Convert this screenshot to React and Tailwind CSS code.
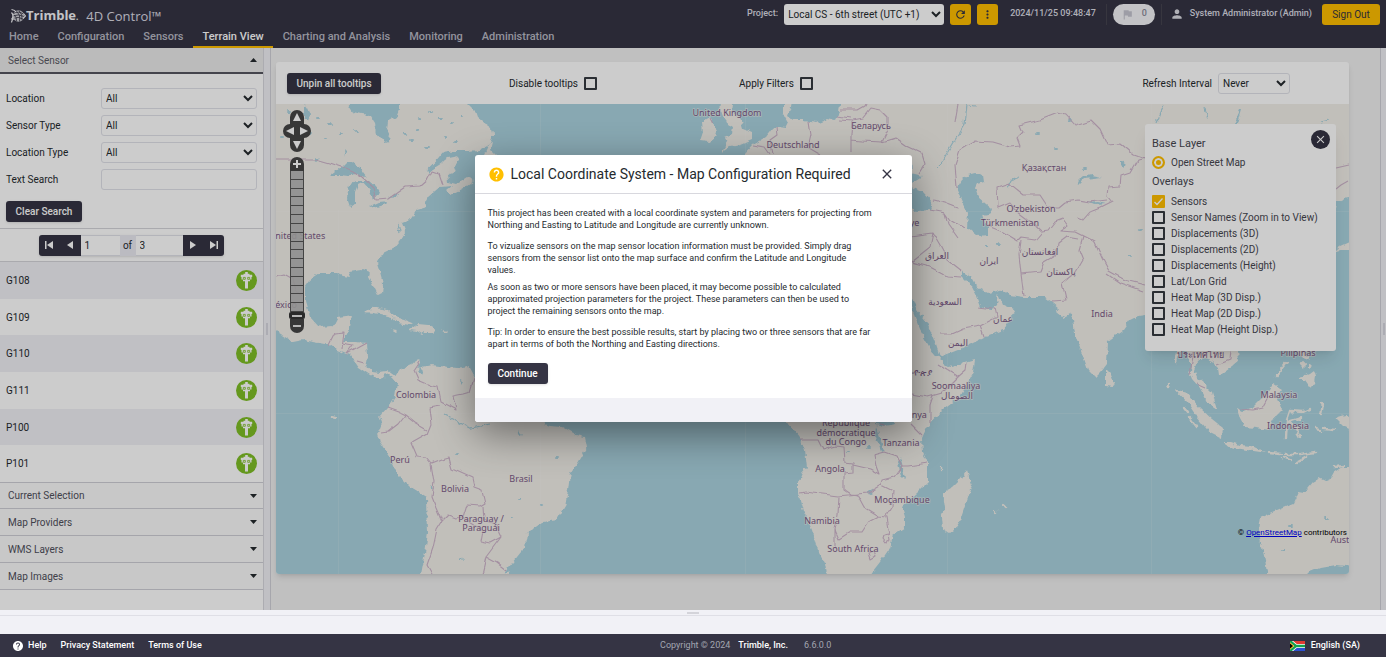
import React, { useState } from "react";
import { MdRefresh, MdMoreVert, MdFlag, MdPerson, MdHelp, MdClose } from "react-icons/md";

const NAV = ["Home", "Configuration", "Sensors", "Terrain View", "Charting and Analysis", "Monitoring", "Administration"];
const SENSORS = ["G108", "G109", "G110", "G111", "P100", "P101"];
const SECTIONS = ["Current Selection", "Map Providers", "WMS Layers", "Map Images"];
const OVERLAYS = [
  "Sensors",
  "Sensor Names (Zoom in to View)",
  "Displacements (3D)",
  "Displacements (2D)",
  "Displacements (Height)",
  "Lat/Lon Grid",
  "Heat Map (3D Disp.)",
  "Heat Map (2D Disp.)",
  "Heat Map (Height Disp.)",
];

// land outlines, map canvas units
const LAND = [
  // North + Central + South America
  "M270 98 L348 98 348 104 353 112 362 114 370 115 375 123 377 133 385 143 389 142 390 133 387 130 388 122 396 117 399 109 399 98 468 98 468 104 476 112 478 118 485 123 492 128 493 136 489 145 480 150 468 151 455 151 443 153 435 163 427 172 440 164 448 158 458 156 460 160 454 166 456 172 447 175 448 182 456 184 467 177 474 180 463 188 450 195 446 191 452 186 440 187 428 197 425 203 427 207 417 210 410 220 402 223 405 231 403 237 395 247 383 253 377 263 380 272 383 283 382 293 378 295 373 285 369 277 370 273 362 270 348 272 350 277 343 276 337 273 320 273 310 280 305 287 305 300 310 317 320 328 333 327 338 317 352 315 350 327 346 335 343 342 355 342 367 343 368 357 366 366 372 371 380 372 388 371 395 376 399 370 403 368 412 364 420 359 422 362 417 368 427 366 431 365 440 366 457 368 468 366 474 377 500 385 520 402 540 412 545 424 550 426 563 427 577 435 585 437 587 448 578 463 570 473 568 490 565 507 557 520 543 522 527 533 525 547 513 562 505 580 420 580 425 553 428 533 427 497 410 487 398 475 390 457 380 442 378 433 382 423 380 417 388 408 395 397 397 383 392 377 386 373 380 380 370 375 358 367 350 355 337 350 330 345 303 340 293 342 277 332 270 325 Z",
  // Cuba, Hispaniola, Jamaica, Puerto Rico
  "M365 312 L373 307 387 310 395 317 403 319 413 323 410 325 397 323 392 317 380 314 Z",
  "M418 324 L428 325 435 329 432 332 425 332 422 334 417 331 409 330 Z",
  "M391 329 L398 330 396 332 Z M442 330 L448 331 446 333 Z",
  // Newfoundland tip
  "M490 143 L493 142 491 150 497 156 484 156 487 150 Z",
  // Ireland + Great Britain
  "M702 123 L710 118 715 125 717 133 715 139 708 142 700 141 703 132 Z",
  "M722 98 L733 98 733 104 732 112 740 118 743 128 752 132 752 140 740 145 730 147 722 152 728 142 725 137 732 134 733 128 727 124 724 116 720 110 Z",
  // Eurasia
  "M740 158 L745 154 753 145 765 138 770 132 773 128 778 127 785 128 788 122 783 113 783 98 792 98 791 107 788 116 793 120 803 120 817 122 827 118 835 120 839 112 840 104 840 98 1355 98 1355 197 1345 199 1336 203 1330 230 1310 260 1290 290 1260 310 1240 335 1238 352 1239 360 1233 365 1219 375 1218 368 1212 362 1203 358 1197 362 1194 370 1197 378 1203 383 1212 392 1217 409 1207 402 1200 388 1192 379 1190 374 1192 366 1187 352 1175 330 1160 320 1145 315 1138 316 1130 320 1123 330 1108 341 1107 363 1100 372 1095 377 1088 370 1082 353 1075 333 1072 313 1063 318 1056 312 1059 308 1052 302 1045 297 1023 297 1010 295 1002 289 996 291 988 293 978 288 972 277 962 271 962 276 970 284 976 296 980 307 991 310 996 305 998 294 1002 304 1015 310 1010 320 1003 330 983 338 963 348 940 357 936 345 927 323 917 310 911 296 900 275 850 270 740 300 Z",
  // Africa
  "M700 300 L880 275 900 290 911 307 920 330 930 348 940 360 950 367 968 362 975 360 973 373 960 397 943 410 927 427 922 438 923 453 928 463 928 482 917 493 902 507 905 517 905 527 893 535 890 547 880 562 866 580 828 580 825 563 818 550 812 530 803 510 798 493 798 483 802 473 807 467 805 450 800 437 788 423 775 405 700 400 Z",
  "M967 470 L972 485 967 500 958 527 950 533 942 528 941 517 945 507 943 493 952 488 962 478 Z",
  "M1106 370 L1111 375 1114 382 1112 387 1106 386 Z",
  // Sumatra, Java, Borneo
  "M1175 389 L1187 393 1200 408 1213 420 1223 428 1222 439 1210 433 1197 417 1187 402 Z",
  "M1223 442 L1231 442 1240 445 1252 446 1267 453 1247 450 1230 447 Z",
  "M1237 408 L1243 411 1252 408 1260 400 1268 390 1273 383 1283 390 1277 398 1282 410 1275 417 1268 430 1257 428 1245 427 1240 418 Z",
  // Philippines
  "M1297 380 L1303 376 1310 373 1314 370 1316 377 1315 385 1310 387 1305 380 Z M1297 350 L1309 350 1306 356 1311 361 1303 358 Z M1299 364 L1305 362 1304 369 Z M1308 363 L1312 367 1308 370 Z",
  // New Guinea, Australia
  "M1335 418 L1345 415 1355 417 1355 432 1344 427 1338 421 Z",
  "M1268 580 L1265 560 1258 530 1260 517 1277 510 1293 503 1298 492 1304 493 1313 482 1320 478 1328 482 1333 473 1342 467 1355 467 1355 567 1337 565 1320 568 1305 574 1303 580 Z",
  // Japan edge
  "M1349 242 L1340 246 1336 252 1343 250 1355 250 1355 242 Z",
];

const THIN_LAND = [
  "M1309 409 L1303 412 1290 411 1287 420 1286 438",
  "M1288 422 L1301 418 M1291 423 L1296 430 1300 437",
  "M1269 453 L1280 454 M1284 454 L1297 454 M1300 454 L1316 452",
  "M1298 462 L1307 457 M1283 457 L1290 460",
  "M1286 363 L1276 376",
  "M1323 404 L1321 415 M1316 429 L1320 430 M1324 429 L1335 430",
  "M1184 407 L1188 412 M1190 418 L1197 427",
  "M1178 352 L1176 362 M1168 388 L1169 384",
  "M1334 467 L1343 466",
  "M332 416 L336 417 M941 467 L941 469 M1004 506 L1005 507 M995 511 L996 512",
];

const WATER = [
  // Great Lakes
  "M330 176 L340 168 346 162 352 162 360 168 366 176 362 178 354 173 348 177 340 176 Z",
  "M349 186 L356 181 364 181 358 184 355 192 355 203 350 207 347 198 Z",
  "M362 181 L370 181 377 187 380 192 375 196 373 201 370 190 Z",
  "M370 206 L379 202 388 201 384 205 374 208 Z M388 199 L396 195 400 194 398 198 Z",
  "M304 104 L307 108 310 115 308 121 304 118 Z M315 156 L319 159 316 161 Z M344 151 L347 154 345 158 Z",
  // Black Sea + Azov
  "M905 185 L911 187 923 192 933 203 930 210 917 211 905 206 Z M905 172 L914 174 922 176 914 181 911 184 905 182 Z",
  // Caspian
  "M957 188 L962 180 968 175 976 173 983 175 984 182 977 184 975 188 978 197 986 204 990 207 992 213 983 215 985 222 988 227 988 235 977 236 967 228 968 213 963 202 Z",
  "M1078 181 L1083 177 1092 175 1102 177 1094 178 1084 179 1079 184 Z M1087 202 L1098 201 1106 203 1096 204 Z",
  "M1121 160 L1126 164 1124 168 1121 165 Z M1240 110 L1242 110 1238 124 1234 124 Z",
  // African lakes
  "M876 416 L892 414 896 424 885 426 876 424 Z",
  "M877 424 L880 438 884 450 881 452 876 436 Z M900 457 L903 468 905 480 901 476 898 462 Z M867 493 L875 488 871 494 Z",
  // South America
  "M420 366 L424 370 422 374 419 370 Z M428 484 L434 487 433 490 Z M459 380 L462 381 460 384 Z M518 430 L522 434 520 435 Z M460 557 L464 558 461 561 Z",
  "M513 562 L508 568 504 574 510 570 516 560 Z",
];

const BORDERS = [
  "M276 159 L316 159 330 163 345 168 352 171 363 178 373 187 376 200 388 199 405 187 420 186 428 179 432 171 438 173 442 185",
  "M276 276 L284 274 293 279 296 289 303 297",
  "M329 345 L335 333 344 332 342 349 M342 344 L353 346 347 354 367 343 M357 360 L364 362",
  "M420 362 L414 371 418 380 432 386 438 387 441 402 456 410 453 396 463 394 470 392 474 378",
  "M441 406 L429 408 431 424 427 434 411 443 417 457 427 458 M388 408 L399 412 405 415 415 423 427 430 M405 415 L398 424 389 431 382 432",
  "M427 458 L432 464 442 460 449 458 452 469 472 478 474 487 482 490 485 503 480 506 467 505 463 518 455 519 447 516 442 521 436 507 432 497 434 482 431 464",
  "M442 521 L437 529 433 548 427 565 432 574 M463 518 L482 530 480 541 490 543 501 537 499 533 M501 537 L486 557 497 563 506 570 M486 557 L482 574 M483 506 L484 520 497 525 499 533",
  // Europe
  "M710 118 L713 124 M753 146 L765 148 770 155 M776 128 L777 135 770 140 773 155 M809 122 L811 135 808 148 820 155 M840 120 L852 121 851 135 851 152 M841 110 L858 110 865 106 866 104 M852 120 L862 118 870 108 880 110 888 118 888 130 882 142 862 141 851 140 M882 142 L895 138 905 145 922 153 925 163 918 174 M838 116 L850 118",
  "M958 104 L955 122",
  // Kazakhstan + Central Asia
  "M957 188 L955 165 960 150 975 141 993 142 1010 147 1020 146 1017 138 1023 132 1020 125 1040 120 1058 113 1065 115 1075 126 1091 121 1100 130 1107 145 1120 144 1133 155 1147 160",
  "M1145 158 L1137 160 1130 172 1121 175 1120 186 1108 187 1107 196 1112 202 1100 208 1090 212 1083 220 1078 218",
  "M998 208 L997 187 1009 183 1024 195 1040 195 1048 207 1059 207 1065 202 1078 200 1090 202 1107 200",
  "M998 208 L1010 203 1018 212 1030 221 1042 232 1048 231 1055 222 1063 219 1068 226 1060 231 1075 232 1083 236",
  "M988 226 L1003 232 1018 241 1021 238 1035 240 1042 232 M1021 241 L1019 255 1021 274 1024 297 M1021 274 L1040 272 1044 262 1056 255 1058 243 1066 237 1078 239",
  "M1083 236 L1095 242 1102 258 1109 271 1125 280 1145 285 M1107 274 L1120 283 1143 291 M1083 236 L1079 250 1083 260 1076 272 1062 283 1066 300 1053 301",
  // Caucasus + Middle East
  "M933 200 L945 203 958 208 M930 210 L945 213 950 220 963 228 M945 213 L948 224 958 238 M911 236 L933 233 940 245 948 260 962 271 M933 233 L930 247 911 262 M911 262 L930 267 947 276 962 277",
  "M940 334 L952 334 963 329 980 326 984 337 M978 307 L993 309 M980 326 L997 317 995 308",
  // Africa
  "M966 362 L965 371 958 377 937 364 M958 377 L942 393 928 397 911 394 M933 396 L930 405 930 422",
  "M800 440 L818 440 823 450 836 446 844 447 845 462 853 463 853 472 844 473 844 490 850 494 858 495 M853 465 L870 469 879 474 876 466 874 455 885 452 897 456 902 466 894 477 882 480 881 485 867 493 M798 493 L805 492 838 496 867 493",
  "M839 497 L838 514 835 530 839 539 850 532 862 532 870 520 878 516 887 517 890 535 M858 495 L865 508 878 516 M881 485 L893 491 892 506 886 516 M908 466 L928 463 M902 466 L908 466 M835 530 L835 548",
  "M884 535 L889 534 890 540 886 542 883 538 Z M868 553 L873 551 875 556 870 559 Z M911 424 L922 435 M880 425 L885 426",
  // South-east Asia
  "M1240 409 L1253 410 1262 408 1268 397 M1197 384 L1206 388 M1217 365 L1230 360 1231 350 M1190 374 L1194 352",
  "M1336 168 L1349 165 M1337 189 L1342 185 1349 181",
];

const LAKE_DOTS = [
  [420, 118], [431, 112], [452, 124], [446, 137], [440, 119], [462, 116], [417, 130], [405, 134], [427, 147], [289, 112], [296, 122],
  [301, 130], [282, 137], [295, 146], [318, 118], [330, 124], [341, 133], [326, 139], [357, 131], [310, 134], [456, 142], [412, 141],
  [1056, 149], [1037, 133], [1070, 120], [987, 247], [998, 244], [1085, 168], [1140, 230], [1130, 256], [1290, 525], [1283, 551], [1326, 518],
  [541, 505], [520, 499], [512, 517], [557, 457], [457, 454], [868, 448], [848, 452],
];

const LABELS = [
  ["United Kingdom", 727, 116], ["Deutschland", 793, 148], ["Беларусь", 871, 129], ["Україна", 896, 169],
  ["Қазақстан", 1044, 171], ["O‘zbekiston", 1031, 212], ["Türkmenistan", 1010, 226], ["Türkiye", 904, 226],
  ["العراق", 937, 259], ["ایران", 989, 264], ["افغانستان", 1040, 255], ["پاکستان", 1061, 275],
  ["السعودية", 945, 305], ["عمان", 1003, 322], ["اليمن", 958, 346], ["India", 1102, 317],
  ["United States", 297, 239], ["México", 282, 308], ["Colombia", 416, 398], ["Perú", 400, 463],
  ["Bolivia", 455, 492], ["Brasil", 521, 482], ["Paraguay /", 481, 522], ["Paraguái", 481, 531],
  ["ኢትዮጵያ", 917, 376], ["Soomaaliya", 956, 389], ["الصومال", 957, 399], ["Kenya", 914, 418],
  ["République", 846, 426], ["démocratique", 846, 436], ["du Congo", 846, 445], ["Tanzania", 901, 446],
  ["Angola", 830, 472], ["Moçambique", 902, 503], ["Namibia", 822, 524], ["South Africa", 853, 552],
  ["ประเทศไทย", 1200, 358], ["Pilipinas", 1298, 356], ["Malaysia", 1279, 398], ["Indonesia", 1288, 429],
  ["Australia", 1349, 543],
];

function WorldMap() {
  return (
    <svg
      className="absolute inset-0 h-full w-full bg-[#aad3df]"
      viewBox="276 104 1073 470"
      preserveAspectRatio="xMinYMin slice"
      role="img"
      aria-label="World map"
    >
      <defs>
        {/* roughens the coastlines a little */}
        <filter id="coast" x="276" y="104" width="1073" height="470" filterUnits="userSpaceOnUse" colorInterpolationFilters="sRGB">
          <feTurbulence type="fractalNoise" baseFrequency="0.16" numOctaves="2" seed="4" />
          <feDisplacementMap in="SourceGraphic" scale="6" xChannelSelector="R" yChannelSelector="G" />
        </filter>
        <filter id="border" x="276" y="104" width="1073" height="470" filterUnits="userSpaceOnUse" colorInterpolationFilters="sRGB">
          <feTurbulence type="fractalNoise" baseFrequency="0.09" numOctaves="1" seed="7" />
          <feDisplacementMap in="SourceGraphic" scale="6" xChannelSelector="R" yChannelSelector="G" />
        </filter>
      </defs>
      <g filter="url(#coast)">
        <g fill="#f2efe9">
          {LAND.map((d) => <path key={d} d={d} />)}
        </g>
        <g fill="none" stroke="#f2efe9" strokeWidth="2.4" strokeLinecap="round">
          {THIN_LAND.map((d) => <path key={d} d={d} />)}
        </g>
        <g fill="#aad3df">
          {WATER.map((d) => <path key={d} d={d} />)}
          {LAKE_DOTS.map(([x, y]) => <ellipse key={`${x}-${y}`} cx={x} cy={y} rx="2.2" ry="1" />)}
        </g>
        <g fill="none" stroke="#aad3df" strokeWidth="1.2">
          <path d="M388 300 L395 306 M966 104 L964 125 955 140 938 168 M1156 122 L1160 112 1163 106 M1205 108 L1208 120 M1320 122 L1328 120 M1008 189 L1012 180 1020 177 M444 415 L458 422 471 428 490 424 M398 224 L400 232 M965 104 L975 106" />
          <path d="M427 172 L438 161 447 154" strokeWidth="2" />
        </g>
      </g>
      <g filter="url(#border)" fill="none" stroke="#cdb4ca" strokeWidth="1.1" strokeLinejoin="round">
        {BORDERS.map((d) => <path key={d} d={d} />)}
      </g>
      <path
        d="M338.5 210 V574 M540.5 104 V574 M745.5 104 V574 M947.5 104 V574 M1151.5 104 V574 M276 211.5 H1349 M276 413.5 H1349"
        stroke="#ffffff"
        strokeOpacity="0.12"
      />
      <g
        className="font-['Noto_Sans','DejaVu_Sans',sans-serif] text-[9px]"
        textAnchor="middle"
        fill="#7d5c88"
        stroke="#f2efe9"
        strokeWidth="1.5"
        strokeOpacity="0.6"
        paintOrder="stroke"
      >
        {LABELS.map(([name, x, y]) => <text key={name} x={x} y={y}>{name}</text>)}
      </g>
    </svg>
  );
}

function TrimbleGlobe() {
  return (
    <svg className="h-4 w-4" viewBox="0 0 16 16" fill="none">
      <circle cx="8.500" cy="8" r="5.800" fill="#f4f4f8" fillOpacity="0.8" />
      <path stroke="#353444" strokeWidth="0.8" d="M3.500 5.500 Q8 2.500 13.500 6 M3 8 Q8 5.500 14 8.500 M3.500 10.500 Q8 8 13 11 M5.500 3 Q11 6 9.500 13.500 M9 2.500 Q13 7 12 12 M4 7 Q7 9 6.500 13" />
      <path stroke="#f4f4f8" strokeWidth="1.2" d="M1.500 1.500 Q5 2 6 4 M1.500 14.500 Q2 11 4.500 10.500 M1.500 4.500 Q4.500 8 1.500 11.500 M13.500 5.500 L15.500 8 13 10.500" />
    </svg>
  );
}

function SensorIcon() {
  return (
    <svg className="h-[21px] w-[21px]" viewBox="0 0 21 21">
      <circle cx="10.500" cy="10.500" r="10.500" fill="#7fbf26" />
      <path fill="#ffffff" d="M9.200 2 H11.800 V3.800 H13.500 V4.800 H16.200 V7 H15.500 V9.500 H14 V11.300 H12 V18.500 H9 V11.300 H7 V9.500 H5.500 V7 H4.800 V4.800 H7.500 V3.800 H9.200 Z" />
      <path fill="none" stroke="#7fbf26" strokeWidth="0.8" d="M7.300 7.400 H9.300 V9.300 H7.300 Z M11.700 7.400 H13.700 V9.300 H11.700 Z" />
    </svg>
  );
}

function SouthAfricaFlag() {
  return (
    <svg className="h-2.5 w-[15px]" viewBox="0 0 15 10">
      <path fill="#e03c31" d="M0 0H15V5H0Z" />
      <path fill="#2b4fd0" d="M0 5H15V10H0Z" />
      <path fill="none" stroke="#fff" strokeWidth="4" d="M0 0 L6 5 L0 10 M6 5H15" />
      <path fill="none" stroke="#12a150" strokeWidth="2.4" d="M0 0 L6 5 L0 10 M6 5H15" />
      <path fill="#ffb612" d="M0 1.500 L4.200 5 L0 8.500Z" />
      <path fill="#000" d="M0 2.500 L3 5 L0 7.500Z" />
    </svg>
  );
}

function Header() {
  return (
    <header className="flex h-12 shrink-0 flex-col bg-[#353444] text-[#dcdce4]">
      <div className="flex h-7 items-center justify-between pr-1.5 pl-2.5">
        <div className="flex items-center pt-1 font-['Open_Sans',sans-serif]">
          <TrimbleGlobe />
          <span className="text-[13px] leading-4 font-bold text-[#f4f4f8]">Trimble<span className="text-[8px]">.</span></span>
          <span className="ml-2 text-[13px] leading-4">4D Control™</span>
        </div>
        <div className="flex items-center text-[9px] font-medium">
          <label htmlFor="project" className="mr-1.5">Project:</label>
          <select id="project" className="mr-1.5 h-[21px] w-[160px] rounded-[3px] bg-white text-[10px] font-normal text-[#252a2e]">
            <option>Local CS - 6th street (UTC +1)</option>
          </select>
          <button aria-label="Refresh" className="mr-1.5 flex h-[21px] w-[21px] items-center justify-center rounded-[3px] bg-[#ffbf00] text-[#353444]">
            <MdRefresh size={13} />
          </button>
          <button aria-label="More" className="flex h-[21px] w-[21px] items-center justify-center rounded-[3px] bg-[#ffbf00] text-[#353444]">
            <MdMoreVert size={13} />
          </button>
          <span className="mr-2.5 ml-3">2024/11/25 09:48:47</span>
          <div className="flex items-center border-x border-[#45444f] px-1.5">
            <span className="flex h-[21px] w-[42px] items-center justify-center gap-2 rounded-full bg-[#f4f4f8] text-[#8b8b98]">
              <MdFlag size={13} className="text-[#c5c5d0]" />0
            </span>
          </div>
          <MdPerson size={14} className="ml-2" />
          <span className="ml-1.5">System Administrator (Admin)</span>
          <button className="ml-2.5 h-[21px] w-[58px] rounded-[3px] bg-[#ffbf00] text-[10px] font-normal text-[#353444]">Sign Out</button>
        </div>
      </div>
      <nav className="flex h-5 gap-px text-[11px] font-medium">
        {NAV.map((item) => (
          <a
            key={item}
            href="#"
            className={
              item === "Terrain View"
                ? "border-b-2 border-[#ffbf00] px-[9px] leading-[18px] text-white"
                : "px-[9px] leading-[18px] text-[#b9b9c4]"
            }
          >
            {item}
          </a>
        ))}
      </nav>
    </header>
  );
}

function Triangle({ up }) {
  return (
    <svg className="h-1 w-[7px]" viewBox="0 0 7 4" fill="#252a2e">
      <path d={up ? "M0 4 L3.500 0 L7 4Z" : "M0 0 L3.500 4 L7 0Z"} />
    </svg>
  );
}

function Sidebar() {
  const [text, setText] = useState("");
  const field = "h-[21px] w-[156px] rounded-[3px] border border-[#e0e1e9] bg-white";
  return (
    <aside className="flex w-[264px] shrink-0 flex-col border-r border-[#d8d8de] bg-white text-[10px] text-[#252a2e]">
      <button className="flex h-[26px] shrink-0 items-center justify-between border-b-2 border-[#55555f] bg-[#eaeaea] pr-1.5 pl-2 text-[#5a5a64]">
        Select Sensor
        <Triangle up />
      </button>
      <div className="flex flex-col gap-1.5 pt-3.5 pr-1.5 pl-1.5">
        {["Location", "Sensor Type", "Location Type"].map((name) => (
          <div key={name} className="flex items-center justify-between">
            <label htmlFor={name}>{name}</label>
            <select id={name} className={field}>
              <option>All</option>
            </select>
          </div>
        ))}
        <div className="flex items-center justify-between">
          <label htmlFor="search">Text Search</label>
          <input id="search" value={text} onChange={(e) => setText(e.target.value)} className={field} />
        </div>
      </div>
      <button
        onClick={() => setText("")}
        className="mt-[11px] ml-1.5 h-[21px] w-[76px] shrink-0 rounded-[3px] bg-[#353444] font-medium text-white shadow"
      >
        Clear Search
      </button>
      <div className="mt-1.5 flex h-[34px] shrink-0 items-center justify-center border-y border-[#d5d5da]">
        <div className="flex h-[21px] w-[185px] overflow-hidden rounded-[3px] bg-[#353444] text-white shadow">
          <button aria-label="First page" className="flex flex-1 items-center justify-center">
            <svg className="h-2 w-2" viewBox="0 0 8 8" fill="currentColor"><path d="M0 0H1.500V8H0Z M8 0V8L2 4Z" /></svg>
          </button>
          <button aria-label="Previous page" className="flex flex-1 items-center justify-center">
            <svg className="h-2 w-2" viewBox="0 0 8 8" fill="currentColor"><path d="M7 0V8L1 4Z" /></svg>
          </button>
          <input aria-label="Page" defaultValue="1" className="w-[39px] border-y border-[#e0e1e9] bg-white px-1 text-[#252a2e]" />
          <span className="flex w-4 items-center justify-center bg-[#eaeaf2] text-[#252a2e]">of</span>
          <input aria-label="Page count" readOnly value="3" className="w-[47px] border-y border-[#e0e1e9] bg-white px-1 text-[#252a2e]" />
          <button aria-label="Next page" className="flex flex-1 items-center justify-center">
            <svg className="h-2 w-2" viewBox="0 0 8 8" fill="currentColor"><path d="M1 0V8L7 4Z" /></svg>
          </button>
          <button aria-label="Last page" className="flex flex-1 items-center justify-center">
            <svg className="h-2 w-2" viewBox="0 0 8 8" fill="currentColor"><path d="M6.500 0H8V8H6.500Z M0 0V8L6 4Z" /></svg>
          </button>
        </div>
      </div>
      <ul className="flex h-[220px] shrink-0 flex-col">
        {SENSORS.map((s, i) => (
          <li key={s} className={`flex flex-1 items-center justify-between px-1.5 ${i % 2 === 0 ? "bg-[#f1f1f6]" : "bg-white"}`}>
            {s}
            <SensorIcon />
          </li>
        ))}
      </ul>
      {SECTIONS.map((s, i) => (
        <button
          key={s}
          className={`flex h-[27px] shrink-0 items-center justify-between bg-[#fafafa] pr-1.5 pl-2 text-[#50505a] border-[#cfcfd6] border-b ${i === 0 ? "border-t" : ""}`}
        >
          {s}
          <Triangle />
        </button>
      ))}
    </aside>
  );
}

function MapControls() {
  const pad = "flex h-3.5 w-3.5 items-center justify-center bg-[#454545] text-white";
  return (
    <div className="absolute top-1.5 left-[7px] flex w-7 flex-col items-center">
      <button aria-label="Pan up" className={`${pad} rounded-t-full`}>
        <svg className="h-2 w-2" viewBox="0 0 8 8" fill="currentColor"><path d="M4 0L8 8H0Z" /></svg>
      </button>
      <div className="flex">
        <button aria-label="Pan left" className={`${pad} rounded-l-full`}>
          <svg className="h-2 w-2" viewBox="0 0 8 8" fill="currentColor"><path d="M0 4L8 0V8Z" /></svg>
        </button>
        <button aria-label="Pan right" className={`${pad} rounded-r-full`}>
          <svg className="h-2 w-2" viewBox="0 0 8 8" fill="currentColor"><path d="M8 4L0 0V8Z" /></svg>
        </button>
      </div>
      <button aria-label="Pan down" className={`${pad} rounded-b-full`}>
        <svg className="h-2 w-2" viewBox="0 0 8 8" fill="currentColor"><path d="M4 8L8 0H0Z" /></svg>
      </button>
      <button aria-label="Zoom in" className={`${pad} mt-[5px] rounded-t-full`}>
        <svg className="h-2 w-2" viewBox="0 0 8 8" fill="currentColor"><path d="M3 0H5V3H8V5H5V8H3V5H0V3H3Z" /></svg>
      </button>
      <div className="flex h-[141px] w-3.5 flex-col border-x border-[#555]">
        {Array.from({ length: 16 }, (_, i) => (
          <span key={i} className="flex-1 border-b border-[#555] bg-[#b4b4b4]/90" />
        ))}
      </div>
      <span className="flex h-[7px] w-4 items-center justify-center rounded-[2px] bg-[#353535]">
        <span className="h-0.5 w-2.5 bg-[#e4e4e4]" />
      </span>
      <button aria-label="Zoom out" className={`${pad} rounded-b-full`}>
        <span className="h-0.5 w-2 bg-[#e4e4e4]" />
      </button>
    </div>
  );
}

function CheckBox({ id, checked, onChange }) {
  return (
    <span className="relative flex h-[13px] w-[13px]">
      <input
        id={id}
        type="checkbox"
        checked={checked}
        onChange={onChange}
        className="h-[13px] w-[13px] appearance-none rounded-[1px] border-2 border-[#353a40] bg-white checked:border-[#ffbf00] checked:bg-[#ffbf00]"
      />
      {checked && (
        <svg className="pointer-events-none absolute inset-0" viewBox="0 0 13 13" fill="none" stroke="#fff" strokeWidth="1.300">
          <path d="M2.500 7 L5 9.500 L10.500 3.500" />
        </svg>
      )}
    </span>
  );
}

function LayerSwitcher() {
  const [shown, setShown] = useState(["Sensors"]);
  const toggle = (name) =>
    setShown((prev) => (prev.includes(name) ? prev.filter((n) => n !== name) : [...prev, name]));

  return (
    <div className="absolute top-5 right-[13px] h-[227px] w-[191px] rounded-[3px] bg-white px-[7px] pt-[13px] text-[10px] text-[#46464f] shadow-lg">
      <button aria-label="Close layers" className="absolute top-1.5 right-1.5 flex h-[19px] w-[19px] items-center justify-center rounded-full bg-[#353444] text-white">
        <MdClose size={13} />
      </button>
      <p className="text-[11px] leading-[14px]">Base Layer</p>
      <div className="mt-[5px] flex h-[13px] items-center gap-1.5">
        <input id="osm" type="radio" defaultChecked className="h-[13px] w-[13px] appearance-none rounded-full border-2 border-[#ffbf00] bg-[#ffbf00] shadow-[inset_0_0_0_2px_#fff]" />
        <label htmlFor="osm">Open Street Map</label>
      </div>
      <p className="mt-1.5 mb-1 text-[11px] leading-[14px]">Overlays</p>
      {OVERLAYS.map((name) => (
        <div key={name} className="flex h-4 items-center gap-1.5">
          <CheckBox id={name} checked={shown.includes(name)} onChange={() => toggle(name)} />
          <label htmlFor={name}>{name}</label>
        </div>
      ))}
    </div>
  );
}

function MapCard() {
  const [noTips, setNoTips] = useState(false);
  const [filters, setFilters] = useState(false);
  return (
    <section className="flex flex-1 flex-col overflow-hidden rounded-[3px] bg-white text-[10px] text-[#252a2e] shadow-md">
      <div className="grid h-[42px] shrink-0 grid-cols-[222px_230px_1fr_auto] items-center pr-[59px] pl-[11px]">
        <div>
          <button className="h-[21px] w-[94px] rounded-[3px] bg-[#353444] font-medium text-white shadow">Unpin all tooltips</button>
        </div>
        <div className="flex items-center gap-1.5">
          <label htmlFor="tips">Disable tooltips</label>
          <CheckBox id="tips" checked={noTips} onChange={() => setNoTips(!noTips)} />
        </div>
        <div className="flex items-center gap-1.5">
          <label htmlFor="filters">Apply Filters</label>
          <CheckBox id="filters" checked={filters} onChange={() => setFilters(!filters)} />
        </div>
        <div className="flex items-center gap-1.5">
          <label htmlFor="interval">Refresh Interval</label>
          <select id="interval" className="h-[21px] w-[72px] rounded-[3px] border border-[#e0e1e9] bg-white">
            <option>Never</option>
          </select>
        </div>
      </div>
      <div className="relative flex-1">
        <WorldMap />
        <MapControls />
        <LayerSwitcher />
        <p className="absolute right-0.5 bottom-[35px] text-[8px] leading-3 text-black">
          © <a href="#" className="text-[#0000ee] underline">OpenStreetMap</a> contributors
        </p>
      </div>
    </section>
  );
}

function ConfigDialog() {
  return (
    <div className="absolute inset-0 flex items-start justify-center bg-black/20 pt-[155px]">
      <div role="dialog" aria-labelledby="dialog-title" className="flex w-full max-w-[437px] flex-col overflow-hidden rounded-[3px] bg-white text-[9px] leading-3 text-[#252a2e] shadow-[0_12px_40px_rgba(0,0,0,0.45)]">
        <div className="flex h-[39px] items-center border-b border-[#d8d8de] px-[13px]">
          <MdHelp size={17} className="text-[#ffbf00]" />
          <h2 id="dialog-title" className="ml-1.5 flex-1 text-sm">Local Coordinate System - Map Configuration Required</h2>
          <button aria-label="Close" className="mr-1 text-[#353444]"><MdClose size={16} /></button>
        </div>
        <div className="pt-[13px] pr-[37px] pb-3.5 pl-[13px]">
          <p>This project has been created with a local coordinate system and parameters for projecting from Northing and Easting to Latitude and Longitude are currently unknown.</p>
          <p className="mt-[9px]">To vizualize sensors on the map sensor location information must be provided. Simply drag sensors from the sensor list onto the map surface and confirm the Latitude and Longitude values.</p>
          <p className="mt-[5px]">As soon as two or more sensors have been placed, it may become possible to calculated approximated projection parameters for the project. These parameters can then be used to project the remaining sensors onto the map.</p>
          <p className="mt-[9px]">Tip: In order to ensure the best possible results, start by placing two or three sensors that are far apart in terms of both the Northing and Easting directions.</p>
          <button className="mt-[13px] h-[21px] w-[60px] rounded-[3px] bg-[#353444] text-[10px] font-medium text-white shadow">Continue</button>
        </div>
        <div className="h-6 bg-[#f1f1f6]" />
      </div>
    </div>
  );
}

function Footer() {
  return (
    <footer className="flex h-[23px] shrink-0 items-center justify-between bg-[#353444] pr-[26px] pl-3 text-[9px] font-medium text-white">
      <div className="flex items-center gap-3.5">
        <a href="#" className="flex items-center gap-1"><MdHelp size={12} />Help</a>
        <a href="#">Privacy Statement</a>
        <a href="#">Terms of Use</a>
      </div>
      <div className="flex items-center font-normal text-[#a3a6b1]">
        Copyright © 2024
        <a href="#" className="mr-4 ml-2 font-medium text-white">Trimble, Inc.</a>
        6.6.0.0
      </div>
      <a href="#" className="flex items-center gap-1.5"><SouthAfricaFlag />English (SA)</a>
    </footer>
  );
}

export default function App() {
  return (
    <div className="flex h-screen flex-col bg-[#f1f1f6] font-['Roboto',sans-serif]">
      <div className="relative flex min-h-0 flex-1 flex-col">
        <Header />
        <div className="flex min-h-0 flex-1">
          <Sidebar />
          <div className="flex w-[7px] shrink-0 items-center justify-center border-r border-[#d0d0d8] bg-[#f1f1f6]">
            <span className="h-3 w-0.5 bg-[#d8d8e0]" />
          </div>
          <main className="flex min-w-0 flex-1 bg-[#f0f0f0] pt-3.5 pr-[31px] pb-9 pl-[5px]">
            <MapCard />
          </main>
          <div className="flex w-1.5 shrink-0 items-center justify-center border-l border-[#d0d0d8] bg-[#f1f1f6]">
            <span className="h-3 w-0.5 bg-[#d8d8e0]" />
          </div>
        </div>
        <ConfigDialog />
      </div>
      <div className="flex h-6 shrink-0 flex-col">
        <div className="flex h-1.5 items-center justify-center border-b border-[#dfdfe6]">
          <span className="h-0.5 w-3 bg-[#d4d4da]" />
        </div>
      </div>
      <Footer />
    </div>
  );
}
